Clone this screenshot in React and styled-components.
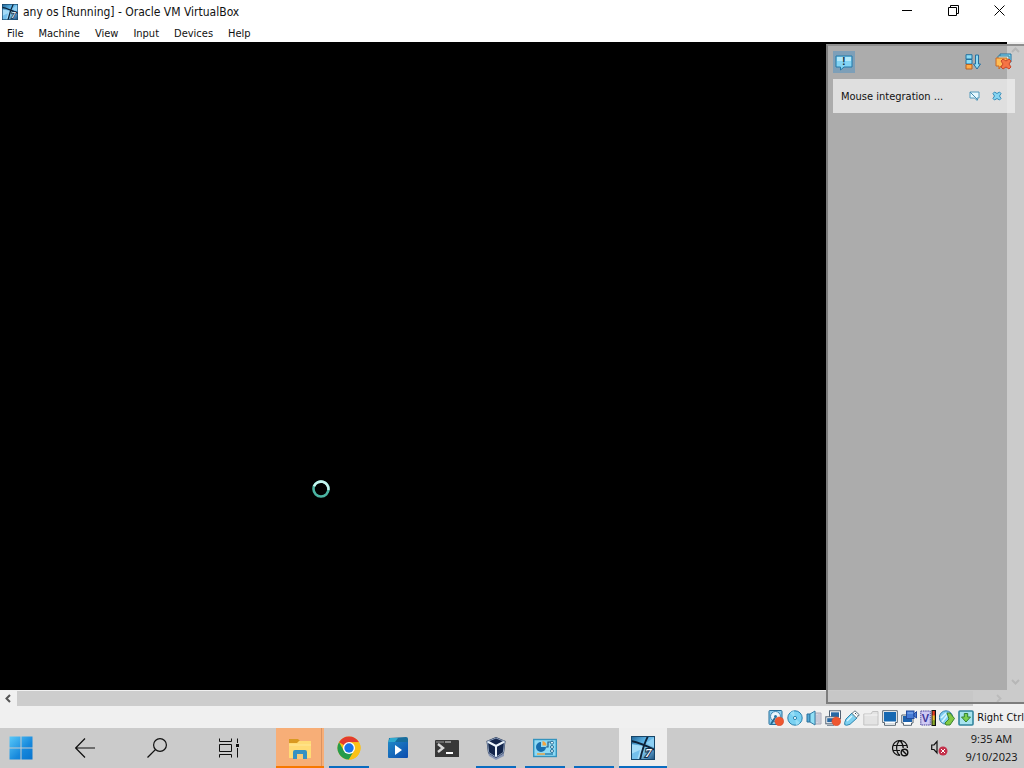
import React from "react";
import styled, { createGlobalStyle } from "styled-components";

const GlobalStyle = createGlobalStyle`
  * {
    box-sizing: border-box;
  }
  body {
    margin: 0;
    overflow: hidden;
    font-family: "DejaVu Sans Condensed", "DejaVu Sans", Tahoma, sans-serif;
    font-size: 11px;
    color: #111;
  }
  button {
    display: flex;
    align-items: center;
    justify-content: center;
    padding: 0;
    border: none;
    background: transparent;
    font: inherit;
    color: inherit;
  }
  svg {
    display: block;
    flex: none;
  }
`;

const Desktop = styled.div`
  display: flex;
  flex-direction: column;
  height: 100vh;
  background: #fff;
`;

const TitleBar = styled.header`
  display: flex;
  align-items: center;
  height: 24px;
  padding-left: 2px;
  gap: 5px;
`;

const Title = styled.h1`
  flex: 1;
  margin: 0;
  font-size: 12px;
  font-weight: 400;
  white-space: nowrap;
`;

const WindowButtons = styled.div`
  display: flex;
  align-self: flex-start;
  padding-right: 2px;
`;

const WindowButton = styled.button`
  width: 46px;
  height: 20px;
`;

const MenuBar = styled.nav`
  display: flex;
  align-items: center;
  height: 18px;
  padding-left: 7px;
  gap: 15px;
`;

const MenuItem = styled.button`
  height: 18px;
`;

const Machine = styled.main`
  position: relative;
  display: grid;
  flex: 1;
  min-height: 0;
  grid-template-columns: 1fr 17px;
  grid-template-rows: 1fr 17px;
  background: #f0f0f0;
`;

const Screen = styled.div`
  position: relative;
  background: #000;
`;

/* the guest's busy pointer */
const Pointer = styled.svg`
  position: absolute;
  left: 311px;
  top: 437px;
`;

const ScrollBar = styled.div`
  display: flex;
  flex-direction: ${(props) => (props.$vertical ? "column" : "row")};
`;

const ScrollButton = styled.button`
  width: 17px;
  height: 17px;
`;

const Thumb = styled.div`
  flex: 1;
  margin: ${(props) => (props.$vertical ? "0" : "1px 17px 1px 0")};
  background: ${(props) => (props.$vertical ? "#f0f0f0" : "#cdcdcd")};
`;

const NoticePanel = styled.aside`
  position: absolute;
  top: 2px;
  right: 0;
  bottom: 3px;
  width: 198px;
  padding: 4px 9px 0 5px;
  background: rgba(198, 198, 198, 0.87);
  border: 2px solid #7d7d7d;
  border-right: none;
  border-top-color: #8e8e8e;
`;

const NoticeTools = styled.div`
  display: flex;
  align-items: center;
  height: 23px;
  margin-right: 1px;
  gap: 8px;
`;

const ToolButton = styled.button`
  width: 22px;
  height: 22px;
  background: ${(props) => (props.$active ? "#7d9fb8" : "transparent")};
  margin-right: ${(props) => (props.$active ? "auto" : "0")};
`;

const Notice = styled.div`
  display: flex;
  align-items: center;
  height: 34px;
  margin-top: 6px;
  padding: 0 9px 0 8px;
  gap: 5px;
  background: rgba(236, 236, 236, 0.8);
`;

const NoticeText = styled.span`
  flex: 1;
  white-space: nowrap;
`;

const NoticeButton = styled.button`
  width: 18px;
  height: 18px;
`;

const StatusBar = styled.footer`
  display: flex;
  align-items: center;
  justify-content: flex-end;
  height: 21px;
  gap: 3px;
  background: #f0f0f0;
`;

const StatusButton = styled.button`
  width: 16px;
  height: 18px;
`;

const HostKey = styled.span`
  white-space: nowrap;
`;

const TaskBar = styled.nav`
  display: flex;
  height: 40px;
  background: #cbcbcb;
`;

const StartButton = styled.button`
  width: 41px;
  margin-right: 8px;
`;

const NavButton = styled.button`
  width: 72px;
`;

const Apps = styled.div`
  display: flex;
  flex: 1;
  gap: 1px;
  margin-left: 11px;
`;

const appBackground = {
  alert: "linear-gradient(90deg, #f7ae77 45px, #d99362 45px, #d99362 46px, #f7ae77 46px)",
  active: "#eeeeee",
};

const AppButton = styled.button`
  position: relative;
  width: 48px;
  background: ${(props) => appBackground[props.$state] || "transparent"};

  &::after {
    content: "";
    position: absolute;
    bottom: 0;
    left: ${(props) => (appBackground[props.$state] ? "0" : "4px")};
    right: ${(props) => (appBackground[props.$state] ? "0" : "4px")};
    height: ${(props) => (props.$state ? "2px" : "0")};
    background: ${(props) => (props.$state === "alert" ? "#f77800" : "#0a6cc0")};
  }
`;

const TrayButton = styled.button`
  width: 39px;
`;

const Clock = styled.button`
  flex-direction: column;
  width: 65px;
  font-family: "Open Sans", "Noto Sans", sans-serif;
  font-size: 11px;
  line-height: 18px;
  white-space: nowrap;
`;

const SevenIcon = ({ size, id }) => (
  <svg width={size} height={size} viewBox="0 0 24 24">
    <defs>
      <linearGradient id={id} x1="0" y1="0" x2="1" y2="1">
        <stop offset="0" stopColor="#1c5f92" />
        <stop offset="0.35" stopColor="#5ab0e2" />
        <stop offset="0.6" stopColor="#79c4ee" />
        <stop offset="1" stopColor="#1a4a78" />
      </linearGradient>
    </defs>
    <rect width="24" height="24" fill={`url(#${id})`} />
    <path d="M0 8 L12 10 L8 24 H0Z" fill="#a4dcf8" />
    <path d="M0 18 L9 14 L6 24 H0Z" fill="#74c0ec" />
    <path d="M15 7 L24 1 V12Z" fill="#8dcff3" />
    <path d="M17 0 Q12 10 9 24 M0 5 Q10 7 24 14" fill="none" stroke="#0d2238" strokeWidth="1.8" />
    <rect x="0.5" y="0.5" width="23" height="23" fill="none" stroke="#174568" />
    <text x="14" y="21" fontSize="13" fontStyle="italic" fontWeight="700" fontFamily="Liberation Serif, serif" fill="#fff" stroke="#12304f" strokeWidth="2" paintOrder="stroke">7</text>
  </svg>
);

const Chevron = ({ d, color = "#555", width = 2 }) => (
  <svg width="9" height="9" viewBox="0 0 9 9">
    <path d={d} fill="none" stroke={color} strokeWidth={width} />
  </svg>
);

const RedDot = () => <circle cx="11.3" cy="11.3" r="4.4" fill="#ee5730" stroke="#d0472a" strokeWidth="0.5" />;

const statusIcons = [
  {
    label: "Hard disks",
    art: (
      <>
        <rect x="1" y="0.5" width="13" height="14" rx="1" fill="#8bd0f1" stroke="#276f9b" />
        <circle cx="7.5" cy="6.5" r="5" fill="#eaf6fc" stroke="#4589b2" />
        <circle cx="7.5" cy="6.5" r="1.5" fill="#2175a6" />
        <path d="M3 14 L7 8" stroke="#256991" strokeWidth="2" />
        <RedDot />
      </>
    ),
  },
  {
    label: "Optical drives",
    art: (
      <>
        <circle cx="8" cy="8" r="7.2" fill="#79d1f2" stroke="#287fac" />
        <path d="M8 8 L3 3 A7 7 0 0 1 7 1Z M8 8 L13 13 A7 7 0 0 1 9 15Z" fill="#98def6" />
        <circle cx="8" cy="8" r="1.6" fill="#f2fbfe" stroke="#2e86af" />
      </>
    ),
  },
  {
    label: "Audio",
    art: (
      <>
        <path d="M9 3 H15 V14 H9Z" fill="#d7d7df" stroke="#aaaab8" />
        <path d="M1 4 H4 V12 H1Z" fill="#55a9d5" stroke="#286e9b" />
        <path d="M4 4 L9 1 V15 L4 12Z" fill="#91dff5" stroke="#347da7" />
        <path d="M11 5 V12 M13 4 V13" stroke="#b9bbce" />
      </>
    ),
  },
  {
    label: "Network",
    art: (
      <>
        <rect x="4.5" y="0.8" width="11" height="8" fill="#fff" stroke="#526273" />
        <rect x="6" y="2.3" width="8" height="5" fill="#2868a4" />
        <rect x="0.8" y="6.8" width="10" height="7" fill="#fff" stroke="#526273" />
        <rect x="2.2" y="8.2" width="7" height="4" fill="#2868a4" />
        <path d="M2 15.3 H9" stroke="#677789" />
        <RedDot />
      </>
    ),
  },
  {
    label: "USB",
    art: (
      <>
        <path d="M8 3 L13 8 L6 14.3 Q2 16 0.8 14.8 Q0 13.4 2 9Z" fill="#7ed1f1" stroke="#2d84ae" />
        <path d="M8 3.4 L11 0.8 L15.3 4.8 L12.4 7.9Z" fill="#fff" stroke="#647782" />
        <path d="M11 3 L12 4 M12.8 4.7 L13.5 5.4" stroke="#34424b" />
        <path d="M3 11 L8 6" stroke="#d8f6ff" strokeWidth="1.5" />
      </>
    ),
  },
  {
    label: "Shared folders",
    art: (
      <>
        <path d="M0.8 4 H8 L9.5 1.5 H15 V15 H0.8Z" fill="#e3e3e3" stroke="#c2c2c2" />
        <path d="M1.5 5 H14.5" stroke="#f5f5f5" />
      </>
    ),
  },
  {
    label: "Display",
    art: (
      <>
        <path d="M0.7 0.7 H15.3 V12.5 H13.5 V15.3 H2.5 V12.5 H0.7Z" fill="#fff" stroke="#57646f" />
        <rect x="2" y="2" width="12" height="9.5" fill="#1769b2" />
        <path d="M3 13.5 H13" stroke="#d8dee3" />
      </>
    ),
  },
  {
    label: "Recording",
    art: (
      <>
        <path d="M0.8 5 H12 V13 H10.5 V15.3 H2.5 V13 H0.8Z" fill="#fff" stroke="#57646f" />
        <rect x="2" y="6" width="9" height="6" fill="#1d62ad" />
        <rect x="5.5" y="1" width="7.5" height="7.5" fill="#477cd6" stroke="#234a9e" />
        <path d="M13 4 L15.5 1.5 V8 L13 6Z" fill="#477cd6" stroke="#234a9e" />
        <path d="M6.5 3 H12" stroke="#8eb6f4" />
      </>
    ),
  },
  {
    label: "Processor",
    art: (
      <>
        <rect x="0.8" y="1" width="9.5" height="14" fill="#cfcaf4" stroke="#4b459d" strokeDasharray="1.5 0.7" />
        <text x="1.8" y="12" fontSize="11" fontWeight="700" fontFamily="Liberation Sans, sans-serif" fill="#3d389a">V</text>
        <rect x="11.5" y="0" width="4.5" height="16" fill="#111" />
        <rect x="12.5" y="1" width="2.3" height="5" fill="#e83c21" />
        <rect x="12.5" y="5.5" width="2.3" height="5" fill="#f0bd2b" />
        <rect x="12.5" y="10" width="2.3" height="5" fill="#8cab2a" />
      </>
    ),
  },
  {
    label: "Mouse integration",
    art: (
      <>
        <circle cx="7" cy="7.5" r="6.7" fill="#82cef1" stroke="#347ea9" />
        <path d="M3 12 L10 3 M2 8 L7 3" stroke="#d6f4ff" strokeWidth="1.6" />
        <path d="M8 3 L11 3 L15.5 8.5 L11 15 L7 15 L6 13 L10 9Z" fill="#82ca43" stroke="#3b812e" />
      </>
    ),
  },
  {
    label: "Keyboard",
    art: (
      <>
        <rect x="1" y="1" width="14" height="14" rx="1" fill="#a7e3ee" stroke="#32849d" strokeWidth="1.6" />
        <path d="M6.3 3.5 H9.7 V7 H12.5 L8 12 L3.5 7 H6.3Z" fill="#7bd04e" stroke="#308233" />
      </>
    ),
  },
];

const FolderIcon = () => (
  <svg width="24" height="24" viewBox="0 0 24 24">
    <path d="M1 3 H10 L12 5 H23 V8 H1Z" fill="#d99921" />
    <path d="M1 7 H9 L11 5 H23 V22 H1Z" fill="#ffdb75" />
    <path d="M1 9 H23" stroke="#ffe899" />
    <path d="M5 23 V16 Q5 14 7 14 H17 Q19 14 19 16 V23 H15 V18 H9 V23Z" fill="#3691c2" />
    <path d="M9 23 V18 H15 V23Z" fill="#f8c878" />
  </svg>
);

const ChromeIcon = () => (
  <svg width="24" height="24" viewBox="0 0 24 24">
    <circle cx="12" cy="12" r="11.5" fill="#fbc116" />
    <path d="M12 12 L2.04 6.25 A11.5 11.5 0 0 1 21.96 6.25 L12 6.25Z" fill="#e33b2e" />
    <path d="M7.02 14.88 L2.04 6.25 A11.5 11.5 0 0 0 12 23.5 L16.98 14.88Z" fill="#269b4c" />
    <path d="M12 6.25 H21.96 A11.5 11.5 0 0 1 12 23.5 L16.98 14.88Z" fill="#fbc116" />
    <circle cx="12" cy="12" r="6" fill="#fff" />
    <circle cx="12" cy="12" r="4.7" fill="#1a73e8" />
  </svg>
);

const MediaIcon = () => (
  <svg width="24" height="24" viewBox="0 0 24 24">
    <defs>
      <linearGradient id="media" x1="0" y1="0" x2="1" y2="1">
        <stop offset="0" stopColor="#1f86c6" />
        <stop offset="1" stopColor="#0c4cae" />
      </linearGradient>
    </defs>
    <path d="M3 2 L20 1 Q22 1 22 3 V9 H2Z" fill="#176d9d" />
    <path d="M2 6 L4 2 H12 L9 6Z" fill="#2fa9cf" />
    <rect x="2" y="6" width="20" height="16" rx="1" fill="url(#media)" />
    <path d="M9 9 L16 14 L9 19Z" fill="#fff" />
  </svg>
);

const TerminalIcon = () => (
  <svg width="24" height="24" viewBox="0 0 24 24">
    <path d="M0 5 Q0 4 1 4 H23 Q24 4 24 5 V21 H0 V5Z" fill="#383838" />
    <path d="M1 5 H9 V7 H1Z" fill="#686868" />
    <path d="M10 5 H16 V7 H10Z" fill="#8c8c8c" />
    <path d="M3 8 L8 12 L3 16" fill="none" stroke="#d8d8d8" strokeWidth="2.4" />
    <path d="M11 17 H18" stroke="#fff" strokeWidth="2" />
  </svg>
);

const CubeIcon = () => (
  <svg width="24" height="24" viewBox="0 0 24 24">
    <path d="M4 17 L12 21 L20 17 V20 L12 24 L5 20Z" fill="#8997b5" />
    <path d="M2.5 5 L12 1 L21.5 5 L20 17 L12 22 L4 17Z" fill="#14264b" />
    <path d="M3.5 5.5 L12 10 L20.5 5.5 M12 10 V21" fill="none" stroke="#edf5fb" strokeWidth="2" />
    <path d="M3.5 5.5 L12 2 L20.5 5.5 L19.3 16.5 L12 21 L4.7 16.5Z" fill="none" stroke="#a9bcd6" strokeWidth="0.8" />
  </svg>
);

const ControlIcon = () => (
  <svg width="24" height="24" viewBox="0 0 24 24">
    <rect x="0.7" y="3.5" width="22.6" height="17" fill="#8edaf5" stroke="#3493bd" strokeWidth="1.4" />
    <path d="M8 6 A5 5 0 1 0 13 11 H8Z" fill="#166dae" />
    <path d="M9.5 5 A5 5 0 0 1 13.5 9.5 H9.5Z" fill="#f2a442" />
    <path d="M13 11 H15 V6 H18" fill="none" stroke="#235f89" strokeWidth="1.2" />
    <circle cx="19" cy="6.7" r="1.5" fill="#eaf9fd" stroke="#276f98" />
    <circle cx="19" cy="11" r="1.5" fill="#eaf9fd" stroke="#276f98" />
    <circle cx="19" cy="15" r="1.5" fill="#eaf9fd" stroke="#276f98" />
    <path d="M4 18 H12" stroke="#ea9d37" strokeWidth="1.4" />
    <path d="M12 18 H20" stroke="#277baa" strokeWidth="1.4" />
  </svg>
);

const apps = [
  { label: "File Explorer", state: "alert", icon: <FolderIcon /> },
  { label: "Google Chrome", state: "open", icon: <ChromeIcon /> },
  { label: "Movies & TV", icon: <MediaIcon /> },
  { label: "Terminal", icon: <TerminalIcon /> },
  { label: "VirtualBox Manager", state: "open", icon: <CubeIcon /> },
  { label: "Control Panel", state: "open", icon: <ControlIcon /> },
  { label: "Untitled window", state: "open" },
  { label: "any os", state: "active", icon: <SevenIcon size={24} id="sevenTask" /> },
];

const menus = ["File", "Machine", "View", "Input", "Devices", "Help"];

const App = () => {
  return (
    <Desktop>
      <GlobalStyle />
      <TitleBar>
        <SevenIcon size={16} id="sevenTitle" />
        <Title>any os [Running] - Oracle VM VirtualBox</Title>
        <WindowButtons>
          <WindowButton aria-label="Minimize">
            <svg width="11" height="11" viewBox="0 0 11 11">
              <path d="M0 5.5 H10" stroke="#000" />
            </svg>
          </WindowButton>
          <WindowButton aria-label="Restore">
            <svg width="11" height="11" viewBox="0 0 11 11">
              <path d="M0.5 2.5 H8.5 V10.5 H0.5Z M2.5 2.5 V0.5 H10.5 V8.5 H8.5" fill="none" stroke="#000" />
            </svg>
          </WindowButton>
          <WindowButton aria-label="Close">
            <svg width="11" height="11" viewBox="0 0 11 11">
              <path d="M0.5 0.5 L10.5 10.5 M10.5 0.5 L0.5 10.5" stroke="#000" />
            </svg>
          </WindowButton>
        </WindowButtons>
      </TitleBar>
      <MenuBar>
        {menus.map((name) => (
          <MenuItem key={name}>{name}</MenuItem>
        ))}
      </MenuBar>

      <Machine>
        <Screen>
          <Pointer width="20" height="20" viewBox="0 0 20 20">
            <circle cx="10" cy="10" r="7.5" fill="none" stroke="#4bb5a3" strokeWidth="2.6" />
            <path d="M3 7.3 A7.5 7.5 0 0 1 17.4 11" fill="none" stroke="#c5f5ef" strokeWidth="2.6" />
          </Pointer>
        </Screen>
        <ScrollBar $vertical>
          <ScrollButton aria-label="Scroll up">
            <Chevron d="M1 6 L4.5 2.5 L8 6" />
          </ScrollButton>
          <Thumb $vertical />
          <ScrollButton aria-label="Scroll down">
            <Chevron d="M1 3 L4.5 6.5 L8 3" />
          </ScrollButton>
        </ScrollBar>
        <ScrollBar>
          <ScrollButton aria-label="Scroll left">
            <Chevron d="M6 1 L2.5 4.5 L6 8" />
          </ScrollButton>
          <Thumb />
          <ScrollButton aria-label="Scroll right">
            <Chevron d="M3 1 L6.5 4.5 L3 8" color="#777" />
          </ScrollButton>
        </ScrollBar>

        <NoticePanel>
          <NoticeTools>
            <ToolButton $active aria-label="Notifications">
              <svg width="18" height="18" viewBox="0 0 18 18">
                <path d="M1 3 H17 V14 H9 L5.5 17 V14 H1Z" fill="#83d4f4" stroke="#2279a8" />
                <path d="M2 4 H16 V8 H2Z" fill="#b4e9fa" />
                <text x="7" y="12" fontSize="11" fontWeight="700" fontFamily="Liberation Sans, sans-serif" fill="#123349">!</text>
              </svg>
            </ToolButton>
            <ToolButton aria-label="Sort notifications">
              <svg width="16" height="16" viewBox="0 0 16 16">
                <path d="M1 0.7 H7 V5 H1Z M1 5.5 H7 V10 H1Z" fill="#8bdcf6" stroke="#23719d" />
                <path d="M1 10.5 H7 V15 H1Z" fill="#ffad48" stroke="#b76122" />
                <path d="M10.5 1 H13.5 V10 H15.5 L12 15 L8.5 10 H10.5Z" fill="#90dcf5" stroke="#256f9e" />
              </svg>
            </ToolButton>
            <ToolButton aria-label="Delete finished notifications">
              <svg width="17" height="17" viewBox="0 0 17 17">
                <path d="M5 1 H16 V9 H5Z" fill="#8bdcf6" stroke="#23719d" />
                <path d="M3 3 H14 V11 H3Z" fill="#d9f3ee" stroke="#337b98" />
                <path d="M1 5 H12 V13 H6 L4 16 V13 H1Z" fill="#ffbd55" stroke="#c96623" />
                <path d="M6 8 L8 6 L11 8 L14 6 L16 8 L14 11 L16 14 L14 16 L11 14 L8 16 L6 14 L8 11Z" fill="#f57445" stroke="#c9472a" />
              </svg>
            </ToolButton>
          </NoticeTools>
          <Notice>
            <NoticeText>Mouse integration ...</NoticeText>
            <NoticeButton aria-label="Suppress notification">
              <svg width="11" height="10" viewBox="0 0 11 10">
                <path d="M1 1 H10 V7 H8 V9.5 L5.5 7 H1Z" fill="#e5f7fd" stroke="#5299bb" />
                <path d="M1 1 L9 9" stroke="#438bb0" />
              </svg>
            </NoticeButton>
            <NoticeButton aria-label="Close notification">
              <svg width="10" height="10" viewBox="0 0 10 10">
                <path d="M1 2.5 L2.5 1 L5 2.5 L7.5 1 L9 2.5 L7.5 5 L9 7.5 L7.5 9 L5 7.5 L2.5 9 L1 7.5 L2.5 5Z" fill="#85d5f2" stroke="#348bb8" />
              </svg>
            </NoticeButton>
          </Notice>
        </NoticePanel>
      </Machine>

      <StatusBar>
        {statusIcons.map((item) => (
          <StatusButton key={item.label} aria-label={item.label}>
            <svg width="16" height="16" viewBox="0 0 16 16">
              {item.art}
            </svg>
          </StatusButton>
        ))}
        <HostKey>Right Ctrl</HostKey>
      </StatusBar>

      <TaskBar>
        <StartButton aria-label="Start">
          <svg width="24" height="24" viewBox="0 0 24 24">
            <defs>
              <linearGradient id="start" gradientUnits="userSpaceOnUse" x1="0" y1="0" x2="24" y2="24">
                <stop offset="0" stopColor="#5bcbfa" />
                <stop offset="0.6" stopColor="#1688dc" />
                <stop offset="1" stopColor="#0873cd" />
              </linearGradient>
            </defs>
            <path d="M0.5 0.5 H11.5 V11.5 H0.5Z M12.5 0.5 H23.5 V11.5 H12.5Z M0.5 12.5 H11.5 V23.5 H0.5Z M12.5 12.5 H23.5 V23.5 H12.5Z" fill="url(#start)" />
          </svg>
        </StartButton>
        <NavButton aria-label="Back">
          <svg width="20" height="20" viewBox="0 0 20 20">
            <path d="M10 0.5 L0.7 10 L10 19.5 M0.7 10 H20" fill="none" stroke="#111" strokeWidth="1.2" />
          </svg>
        </NavButton>
        <NavButton aria-label="Search">
          <svg width="20" height="20" viewBox="0 0 20 20">
            <circle cx="13" cy="7" r="6.4" fill="none" stroke="#111" strokeWidth="1.2" />
            <path d="M8.4 11.6 L0.5 19.5" stroke="#111" strokeWidth="1.3" />
          </svg>
        </NavButton>
        <NavButton aria-label="Task View">
          <svg width="20" height="20" viewBox="0 0 20 20">
            <path d="M0.5 0.5 V3.5 H12.5 V0.5 M0.5 6.5 H12.5 V13.5 H0.5Z M0.5 19.5 V16.5 H12.5 V19.5 M18.5 0.5 V5 M18.5 10 V19.5" fill="none" stroke="#111" />
            <rect x="17" y="6" width="3" height="3" fill="#111" />
          </svg>
        </NavButton>
        <Apps>
          {apps.map((app) => (
            <AppButton key={app.label} $state={app.state} aria-label={app.label}>
              {app.icon}
            </AppButton>
          ))}
        </Apps>
        <TrayButton aria-label="Network, not connected">
          <svg width="17" height="17" viewBox="0 0 17 17">
            <path d="M8 15.5 A7.5 7.5 0 1 1 15.5 8 M8 0.5 C3.5 4 3.5 12 8 15.5 M8 0.5 C10.5 3 11.2 5 11.2 8 M1.2 5.5 H14.8 M1.2 10.5 H8" fill="none" stroke="#111" strokeWidth="1.2" />
            <circle cx="12.5" cy="12.5" r="3.3" fill="#cbcbcb" stroke="#111" strokeWidth="1.4" />
            <path d="M10.3 10.3 L14.7 14.7" stroke="#111" strokeWidth="1.4" />
          </svg>
        </TrayButton>
        <TrayButton aria-label="Volume muted">
          <svg width="17" height="16" viewBox="0 0 17 16">
            <path d="M0.7 5 H3 L6 1.5 V13 L3 9.5 H0.7Z" fill="none" stroke="#111" strokeWidth="1.2" />
            <circle cx="12" cy="11" r="4.5" fill="#c4314b" />
            <path d="M10 9 L14 13 M14 9 L10 13" stroke="#fff" />
          </svg>
        </TrayButton>
        <Clock>
          <span>9:35 AM</span>
          <span>9/10/2023</span>
        </Clock>
      </TaskBar>
    </Desktop>
  );
};

export default App;
